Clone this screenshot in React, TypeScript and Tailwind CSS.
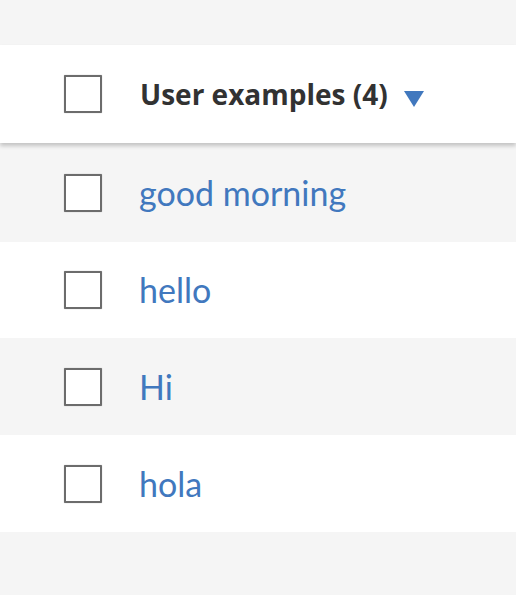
import React from "react";

const rows = [
  { text: "good morning", bg: "bg-[#f5f5f5]", h: "h-[99px]" },
  { text: "hello", bg: "bg-white", h: "h-[96px]" },
  { text: "Hi", bg: "bg-[#f5f5f5]", h: "h-[97px]" },
  { text: "hola", bg: "bg-white", h: "h-[97px]" },
];

function Box() {
  return <div className="w-[38px] h-[38px] shrink-0 border-2 border-[#6c6c6c] bg-white rounded-[1px] shadow-[0_0_1px_rgba(0,0,0,0.4)]" />;
}

export default function App() {
  return (
    <div className="w-[516px] h-[595px] bg-[#f5f5f5] overflow-hidden flex flex-col">
      <div className="h-[45px] shrink-0" />
      <div className="relative z-10 h-[98px] shrink-0 bg-white flex items-center pl-[64px] shadow-[0_3px_4px_rgba(0,0,0,0.2)]">
        <Box />
        <span
          className="ml-[38px] text-[28px] font-bold text-[#323232] leading-none"
          style={{ fontFamily: '"Open Sans", sans-serif' }}
        >
          User examples (4)
        </span>
        <svg width="20" height="16" viewBox="0 0 20 16" className="ml-[16px] mt-[10px]">
          <polygon points="0,0 20,0 10,16" fill="#4178be" />
        </svg>
      </div>
      {rows.map((r) => (
        <div key={r.text} className={`${r.h} ${r.bg} shrink-0 flex items-center pl-[64px]`}>
          <Box />
          <span
            className="ml-[37px] text-[34px] text-[#4178be] leading-none"
            style={{ fontFamily: 'Lato, sans-serif' }}
          >
            {r.text}
          </span>
        </div>
      ))}
    </div>
  );
}
